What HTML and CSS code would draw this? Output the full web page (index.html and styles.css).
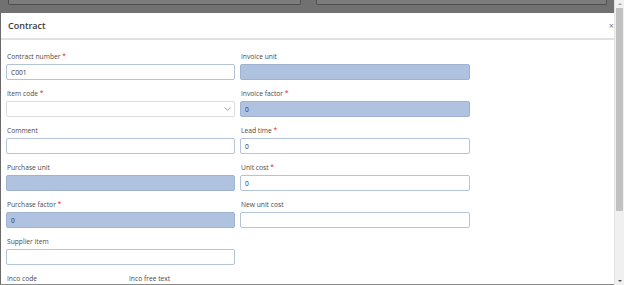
FILE: index.html
```html
<!DOCTYPE html>
<html lang="en">
<head>
  <meta charset="UTF-8" />
  <meta name="viewport" content="width=device-width, initial-scale=1.0"/>
  <title>Contract</title>
  <link rel="stylesheet" href="styles.css">
</head>
<body>

  <div class="page">
    <div class="backdrop">
      <div class="ghost-box left"></div>
      <div class="ghost-box right"></div>
    </div>

    <div class="modal">
      <div class="modal-header">
        <h1>Contract</h1>
        <span class="close">&times;</span>
      </div>

      <div class="modal-body">
        <div class="col">
          <div class="field">
            <label>Contract number <span class="req">*</span></label>
            <input type="text" value="C001">
          </div>
          <div class="field">
            <label>Item code <span class="req">*</span></label>
            <div class="select">
              <svg width="7" height="4" viewBox="0 0 7 4"><path d="M0.5 0.5 L3.5 3.3 L6.5 0.5" fill="none" stroke="#888" stroke-width="0.8"/></svg>
            </div>
          </div>
          <div class="field">
            <label>Comment</label>
            <input type="text">
          </div>
          <div class="field">
            <label>Purchase unit</label>
            <input type="text" class="disabled" disabled>
          </div>
          <div class="field">
            <label>Purchase factor <span class="req">*</span></label>
            <input type="text" class="disabled" value="0" disabled>
          </div>
          <div class="field">
            <label>Supplier item</label>
            <input type="text">
          </div>
          <div class="sub-row">
            <div class="field"><label>Inco code</label></div>
            <div class="field"><label>Inco free text</label></div>
          </div>
        </div>

        <div class="col">
          <div class="field">
            <label>Invoice unit</label>
            <input type="text" class="disabled" disabled>
          </div>
          <div class="field">
            <label>Invoice factor <span class="req">*</span></label>
            <input type="text" class="disabled" value="0" disabled>
          </div>
          <div class="field">
            <label>Lead time <span class="req">*</span></label>
            <input type="text" value="0">
          </div>
          <div class="field">
            <label>Unit cost <span class="req">*</span></label>
            <input type="text" value="0">
          </div>
          <div class="field">
            <label>New unit cost</label>
            <input type="text">
          </div>
        </div>
      </div>
    </div>
  </div>

  <div class="scrollbar">
    <div class="arrow up"></div>
    <div class="thumb"></div>
    <div class="arrow down"></div>
  </div>

</body>
</html>
```

FILE: styles.css
```css
body {
  font-family: 'Open Sans', 'Noto Sans', sans-serif;
  margin: 0;
  width: 624px;
  height: 285px;
  overflow: hidden;
  display: flex;
  background: #fff;
}

.page {
  flex: 1;
  display: flex;
  flex-direction: column;
}

.backdrop {
  height: 13px;
  background: #717171;
  display: flex;
  gap: 15px;
  padding: 0 7px 0 8px;
}

.ghost-box {
  height: 4px;
  background: #7c7c7c;
  border: 1px solid #4e4e4e;
  border-top: none;
  border-radius: 0 0 2px 2px;
}

.ghost-box.left {
  width: 291px;
}

.ghost-box.right {
  flex: 1;
}

.modal {
  flex: 1;
  background: #fff;
  border-left: 1px solid #6a6a6a;
  border-bottom: 1px solid #8a8a8a;
}

.modal-header {
  height: 25px;
  display: flex;
  align-items: center;
  justify-content: space-between;
  padding: 0 0 0 7px;
  border-bottom: 2px solid #e2e2e2;
}

.modal-header h1 {
  margin: 0;
  font-size: 9px;
  font-weight: 600;
  color: #3a3a3a;
}

.close {
  font-size: 9px;
  color: #777;
}

.modal-body {
  display: flex;
  gap: 5px;
  padding: 11px 0 0 5px;
}

.col {
  display: flex;
  flex-direction: column;
  gap: 8px;
}

.col:first-child {
  width: 229px;
}

.col:last-child {
  width: 230px;
}

.field {
  display: flex;
  flex-direction: column;
  gap: 2px;
}

label {
  font-size: 6.7px;
  line-height: 11px;
  color: #4a4a4a;
  padding-left: 1px;
}

.req {
  color: #e51c1c;
}

input, .select {
  box-sizing: border-box;
  height: 16px;
  width: 100%;
  margin: 0;
  padding: 0 4px;
  font-family: inherit;
  font-size: 6.7px;
  color: #333;
  background: #fff;
  border: 1px solid #b4c3d8;
  border-radius: 2px;
}

input.disabled {
  background: #afc3e1;
  border-color: #9fb3d0;
}

.select {
  display: flex;
  align-items: center;
  justify-content: flex-end;
  padding-right: 3px;
  border-color: #dcdcdc;
}

.sub-row {
  display: flex;
}

.sub-row .field {
  flex: 0 0 122px;
}

.scrollbar {
  width: 9px;
  background: #f0f0f0;
  border-left: 1px solid #e4e4e4;
  display: flex;
  flex-direction: column;
  align-items: center;
}

.arrow {
  width: 0;
  height: 0;
  border-left: 2px solid transparent;
  border-right: 2px solid transparent;
  margin: 3px 0;
}

.arrow.up {
  border-bottom: 2px solid #a3a3a3;
}

.arrow.down {
  border-top: 2px solid #505050;
  margin-top: auto;
}

.thumb {
  width: 7px;
  height: 203px;
  background: #c1c1c1;
}
```
